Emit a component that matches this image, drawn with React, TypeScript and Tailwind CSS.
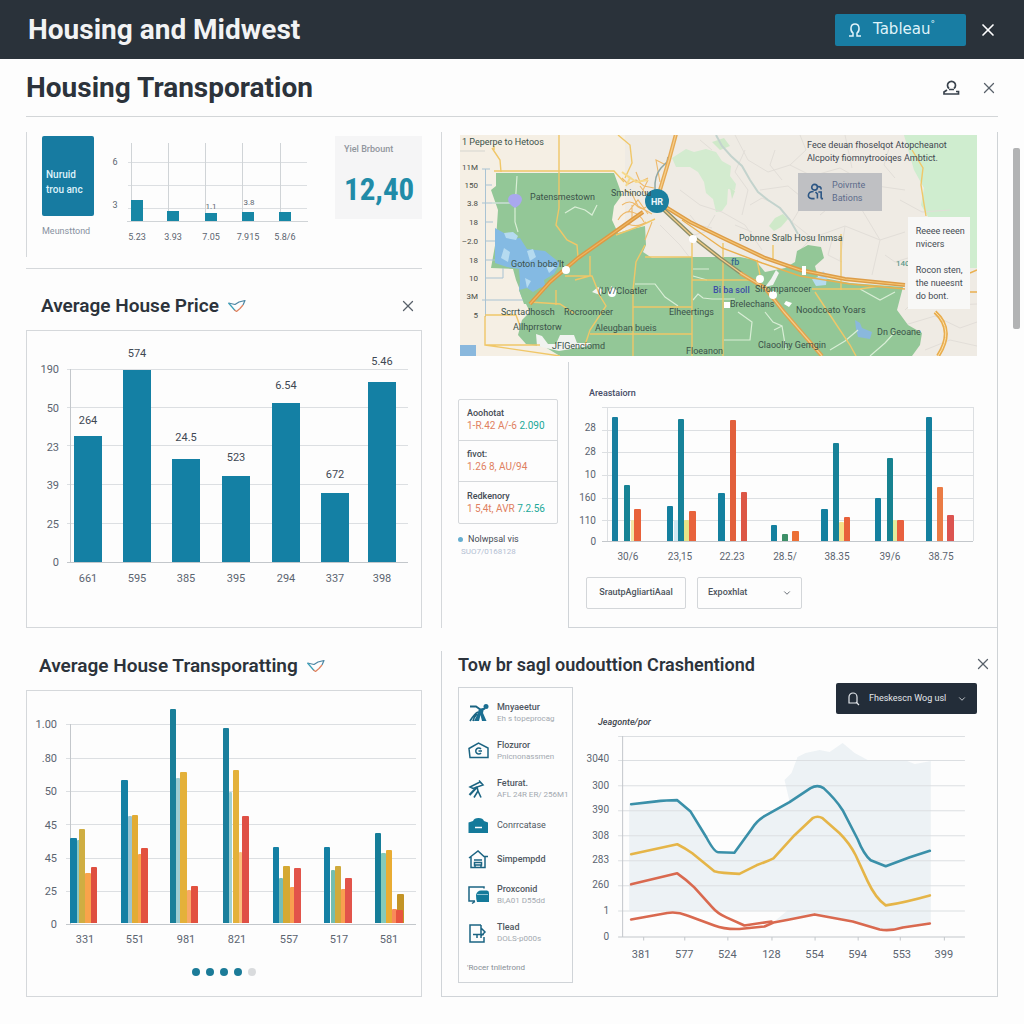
import React from "react";
import { ChevronDown, X } from "lucide-react";

const TEAL = "#1480a4";
const GRID = "#dcdfe2";
const AXIS = "#c3c7cb";

type Label = { at: number; text: string };
type Bar = { x: number; y: number; w: number; fill: string };

const price = [
  { x: 74, y: 436, value: "264", labelY: 424, tick: "661" },
  { x: 123, y: 370, value: "574", labelY: 357, tick: "595" },
  { x: 172, y: 459, value: "24.5", labelY: 441, tick: "385" },
  { x: 222, y: 476, value: "523", labelY: 461, tick: "395" },
  { x: 272, y: 403, value: "6.54", labelY: 389, tick: "294" },
  { x: 321, y: 493, value: "672", labelY: 478, tick: "337" },
  { x: 368, y: 382, value: "5.46", labelY: 365, tick: "398" },
];

const priceAxis: Label[] = [
  { at: 369, text: "190" },
  { at: 408, text: "50" },
  { at: 447, text: "23" },
  { at: 485, text: "39" },
  { at: 524, text: "25" },
  { at: 562, text: "0" },
];

const transportBars: Bar[] = [
  { x: 77, y: 840, w: 3, fill: "#8cc7c4" },
  { x: 70, y: 838, w: 7, fill: TEAL },
  { x: 79, y: 829, w: 6, fill: "#cfae42" },
  { x: 85, y: 873, w: 6, fill: "#f9a34b" },
  { x: 91, y: 867, w: 6, fill: "#de4f40" },
  { x: 128, y: 816, w: 4, fill: "#9cc5d2" },
  { x: 121, y: 780, w: 7, fill: TEAL },
  { x: 132, y: 815, w: 6, fill: "#e2ac35" },
  { x: 138, y: 854, w: 4, fill: "#f9a34b" },
  { x: 141, y: 848, w: 7, fill: "#e2513f" },
  { x: 176, y: 778, w: 4, fill: "#9fcdd2" },
  { x: 170, y: 709, w: 6, fill: "#1a7f99" },
  { x: 180, y: 772, w: 7, fill: "#e4b13a" },
  { x: 187, y: 890, w: 4, fill: "#f9a868" },
  { x: 191, y: 886, w: 7, fill: "#e2513f" },
  { x: 229, y: 792, w: 3, fill: "#9fd0d4" },
  { x: 223, y: 728, w: 6, fill: "#1a7f9c" },
  { x: 233, y: 770, w: 6, fill: "#e4b13a" },
  { x: 239, y: 852, w: 3, fill: "#fbc07c" },
  { x: 242, y: 816, w: 7, fill: "#df5046" },
  { x: 279, y: 878, w: 4, fill: "#74bdb9" },
  { x: 273, y: 847, w: 6, fill: TEAL },
  { x: 283, y: 866, w: 7, fill: "#d5a933" },
  { x: 290, y: 887, w: 5, fill: "#f9a050" },
  { x: 294, y: 868, w: 7, fill: "#e2544a" },
  { x: 331, y: 870, w: 4, fill: "#74bdb0" },
  { x: 324, y: 847, w: 6, fill: TEAL },
  { x: 335, y: 866, w: 6, fill: "#d0aa3c" },
  { x: 341, y: 889, w: 5, fill: "#f9a050" },
  { x: 345, y: 878, w: 7, fill: "#e2544a" },
  { x: 381, y: 853, w: 5, fill: "#84cabb" },
  { x: 375, y: 833, w: 6, fill: "#157d98" },
  { x: 386, y: 850, w: 6, fill: "#e9ac33" },
  { x: 397, y: 894, w: 7, fill: "#c39426" },
  { x: 392, y: 909, w: 5, fill: "#f98a5a" },
  { x: 396, y: 910, w: 7, fill: "#e8553f" },
];

const transportAxis: Label[] = [
  { at: 724, text: "1.00" },
  { at: 758, text: ".80" },
  { at: 791, text: "50" },
  { at: 825, text: "45" },
  { at: 858, text: "45" },
  { at: 891, text: "25" },
  { at: 924, text: "0" },
];

const transportTicks: Label[] = [
  { at: 85, text: "331" },
  { at: 135, text: "551" },
  { at: 186, text: "981" },
  { at: 237, text: "821" },
  { at: 289, text: "557" },
  { at: 339, text: "517" },
  { at: 389, text: "581" },
];

const areaBars: Bar[] = [
  { x: 612, y: 417, w: 6, fill: "#187f9f" },
  { x: 624, y: 485, w: 6, fill: "#178395" },
  { x: 631, y: 520, w: 3, fill: "#f3e7a6" },
  { x: 634, y: 509, w: 7, fill: "#e8613a" },
  { x: 667, y: 506, w: 6, fill: "#14809f" },
  { x: 674, y: 520, w: 5, fill: "#cfe8f3" },
  { x: 684, y: 520, w: 5, fill: "#e6e488" },
  { x: 678, y: 419, w: 6, fill: "#178299" },
  { x: 689, y: 511, w: 7, fill: "#e8633c" },
  { x: 718, y: 493, w: 7, fill: "#14809f" },
  { x: 730, y: 420, w: 6, fill: "#e2603c" },
  { x: 741, y: 492, w: 6, fill: "#dc5645" },
  { x: 771, y: 525, w: 6, fill: "#14809f" },
  { x: 782, y: 534, w: 6, fill: "#3d8f68" },
  { x: 792, y: 531, w: 7, fill: "#ec7036" },
  { x: 821, y: 509, w: 7, fill: "#14809f" },
  { x: 839, y: 522, w: 5, fill: "#f6e08a" },
  { x: 833, y: 443, w: 6, fill: "#178299" },
  { x: 844, y: 517, w: 6, fill: "#e8603a" },
  { x: 875, y: 498, w: 6, fill: "#14809f" },
  { x: 893, y: 520, w: 4, fill: "#e3ec9c" },
  { x: 887, y: 458, w: 6, fill: "#178290" },
  { x: 897, y: 520, w: 7, fill: "#e8603f" },
  { x: 926, y: 417, w: 6, fill: "#14809f" },
  { x: 937, y: 487, w: 6, fill: "#ea7b45" },
  { x: 947, y: 515, w: 7, fill: "#dc5450" },
];

const areaAxis: Label[] = [
  { at: 427, text: "28" },
  { at: 451, text: "28" },
  { at: 474, text: "10" },
  { at: 497, text: "160" },
  { at: 520, text: "110" },
  { at: 541, text: "0" },
];

const areaTicks: Label[] = [
  { at: 628, text: "30/6" },
  { at: 680, text: "23,15" },
  { at: 732, text: "22.23" },
  { at: 785, text: "28.5/" },
  { at: 837, text: "38.35" },
  { at: 890, text: "39/6" },
  { at: 941, text: "38.75" },
];

const crashAxis: Label[] = [
  { at: 758, text: "3040" },
  { at: 785, text: "300" },
  { at: 809, text: "390" },
  { at: 835, text: "308" },
  { at: 859, text: "283" },
  { at: 884, text: "260" },
  { at: 910, text: "1" },
  { at: 936, text: "0" },
];

const crashTicks: Label[] = [
  { at: 642, text: "381" },
  { at: 685, text: "577" },
  { at: 728, text: "524" },
  { at: 772, text: "128" },
  { at: 815, text: "554" },
  { at: 858, text: "594" },
  { at: 902, text: "553" },
  { at: 944, text: "399" },
];

function YLabels({ items, x, size = 11 }: { items: Label[]; x: number; size?: number }) {
  return (
    <g fontSize={size} fill="#5b6470" textAnchor="end">
      {items.map((l) => (
        <text key={l.at} x={x} y={l.at + 4}>
          {l.text}
        </text>
      ))}
    </g>
  );
}

function XLabels({ items, y, size = 11 }: { items: Label[]; y: number; size?: number }) {
  return (
    <g fontSize={size} fill="#5b6470" textAnchor="middle">
      {items.map((l) => (
        <text key={l.at} x={l.at} y={y}>
          {l.text}
        </text>
      ))}
    </g>
  );
}

function Grid({ ys, x1, x2 }: { ys: number[]; x1: number; x2: number }) {
  return (
    <g stroke={GRID}>
      {ys.map((y) => (
        <path key={y} d={`M${x1} ${y}.5H${x2}`} />
      ))}
    </g>
  );
}

function Bars({ bars, base }: { bars: Bar[]; base: number }) {
  return (
    <g>
      {bars.map((b) => (
        <path
          key={`${b.x}-${b.y}`}
          fill={b.fill}
          d={`M${b.x} ${base}V${b.y + 1}q0 -1 1 -1H${b.x + b.w - 1}q1 0 1 1V${base}Z`}
        />
      ))}
    </g>
  );
}

function CloseButton({ label, className }: { label: string; className: string }) {
  return (
    <button type="button" aria-label={label} className={className}>
      <X className="size-[18px]" strokeWidth={1.7} />
    </button>
  );
}

function CheckMark() {
  return (
    <svg viewBox="0 0 20 14" className="h-[14px] w-5" fill="none" strokeWidth="1.2" strokeLinejoin="round">
      <path d="M1.5 4 L8 5.5 L12 3 L18 1.5 L16 6" stroke="#4c86a3" />
      <path d="M1.5 4 L5 8 L8 11.500" stroke="#3b9fb8" />
      <path d="M7.500 11L9.500 12.500L13 9.500L16 6" stroke="#e0825f" />
    </svg>
  );
}

function BellIcon({ className }: { className: string }) {
  return (
    <svg viewBox="0 0 16 16" className={className} fill="none" stroke="currentColor" strokeWidth="1.5">
      <path d="M2 14h4v-3C3 9 3 2 8 2s5 7 2 9v3h4" />
    </svg>
  );
}

function MiniChart() {
  const columns = [
    { x: 131, y: 200, tick: "5.23" },
    { x: 167, y: 211, tick: "3.93" },
    { x: 205, y: 213, tick: "7.05" },
    { x: 242, y: 212, tick: "7.915" },
    { x: 279, y: 212, tick: "5.8/6" },
  ];
  return (
    <svg viewBox="102 136 225 112" className="block w-full" role="img" aria-label="Mini bar chart">
      <Grid ys={[162, 185, 208]} x1={128} x2={307} />
      <g stroke="#d0d4d7">
        {[131, 168, 205, 242, 280].map((x) => (
          <path key={x} d={`M${x}.5 143V221`} />
        ))}
        <path d="M127 221.5H308" />
      </g>
      {columns.map((c) => (
        <g key={c.x}>
          <rect x={c.x} y={c.y} width={12} height={221 - c.y} fill="#1787a5" />
          <text x={c.x + 6} y={240} fontSize="9" textAnchor="middle" fill="#5b6470">
            {c.tick}
          </text>
        </g>
      ))}
      <g fontSize="9" fill="#5b6470" textAnchor="middle">
        <text x="115" y="165">6</text>
        <text x="115" y="208">3</text>
        <text x="211" y="209" fontSize="8">1.1</text>
        <text x="249" y="205" fontSize="8">3.8</text>
      </g>
    </svg>
  );
}

function PriceChart() {
  return (
    <svg viewBox="27 331 394 296" className="block w-full" role="img" aria-label="Average house price by group">
      <Grid ys={[369, 407, 445, 484, 523]} x1={67} x2={408} />
      <path d="M70.5 369V562M67 562.5H408" stroke={AXIS} />
      <YLabels items={priceAxis} x={59} />
      {price.map((p) => (
        <g key={p.x} textAnchor="middle">
          <rect x={p.x} y={p.y} width={28} height={562 - p.y} fill={TEAL} />
          <text x={p.x + 14} y={p.labelY} fontSize="11" fill="#3f4853">
            {p.value}
          </text>
          <text x={p.x + 14} y={582} fontSize="11" fill="#5b6470">
            {p.tick}
          </text>
        </g>
      ))}
    </svg>
  );
}

function TransportChart() {
  return (
    <svg viewBox="27 691 394 269" className="block w-full" role="img" aria-label="Average house transporting by group">
      <Grid ys={[724, 758, 791, 824, 858, 891]} x1={66} x2={416} />
      <path d="M70.5 724V924M66 924.5H416" stroke={AXIS} />
      <Bars bars={transportBars} base={923} />
      <YLabels items={transportAxis} x={57} />
      <XLabels items={transportTicks} y={943} />
    </svg>
  );
}

function AreaChart() {
  return (
    <svg viewBox="569 400 428 168" className="block w-full" role="img" aria-label="Area figures">
      <Grid ys={[407, 430, 452, 475, 498, 520]} x1={602} x2={973} />
      <path d="M607.5 407V541M973.5 407V541" stroke={GRID} />
      <path d="M602 541.5H973" stroke={AXIS} />
      <Bars bars={areaBars} base={541} />
      <YLabels items={areaAxis} x={596} size={10} />
      <XLabels items={areaTicks} y={560} size={10} />
    </svg>
  );
}

function CrashChart() {
  return (
    <svg viewBox="574 730 423 236" className="block w-full" role="img" aria-label="Crash lines">
      <path
        fill="#edf2f5"
        d="M630 804L655 801L678 800L690 811L717 852L735 852L758 822L773 810L790 801L785 780L792 773L798 757L806 753L820 750L830 752L843 743L855 753L868 760L905 760L915 764L931 761V924L888 930L853 921L815 914L776 920L788 910H630Z"
      />
      <Grid ys={[736, 760, 785, 810, 835, 860, 885, 910]} x1={619} x2={965} />
      <path
        stroke={AXIS}
        d="M623.5 736V936M619 936.5H965M644.5 936v4M685.5 936v4M728.5 936v4M772.5 936v4M815.5 936v4M858.5 936v4M900.5 936v4M944.5 936v4"
      />
      <g fill="none" strokeWidth="2.6" strokeLinejoin="round" strokeLinecap="round">
        <path stroke="#d9694f" d="M632 884L678 873Q688 880 695 887L713 907Q718 913 727 917L745 925L772 921" />
        <path
          stroke="#d9694f"
          d="M632 919L668 912.500Q678 911 688 915L715 925Q725 929 740 928.500L765 926L774 922L790 919L815 914L853 921L880 929Q890 931 903 927L930 923"
        />
        <path
          stroke="#e5b548"
          d="M632 854L678 844Q686 848 693 853L715 871Q722 873 740 873.500L757 865Q768 861 774 858L795 835L813 818Q818 815 823 818L840 833Q850 843 856 855L868 881Q876 898 886 905Q905 902 930 895"
        />
        <path
          stroke="#3a90a9"
          d="M632 804L655 801.500Q668 800 678 800L691 811L707 837Q715 852 719 852L735 852.500L752 829Q757 821 765 816L790 802L811 788Q818 784 824 788Q836 799 843 810L858 839Q864 854 871 860L886 866L910 857L930 850.500"
        />
      </g>
      <YLabels items={crashAxis} x={610} size={10} />
      <XLabels items={crashTicks} y={957} />
    </svg>
  );
}

const mapAxis: Label[] = [
  { at: 167, text: "11M" },
  { at: 185, text: "150" },
  { at: 203, text: "3.8" },
  { at: 222, text: "18" },
  { at: 241, text: "–2.0" },
  { at: 260, text: "18" },
  { at: 278, text: "10" },
  { at: 296, text: "3M" },
  { at: 315, text: "5" },
];

const places: { x: number; y: number; text: string }[] = [
  { x: 462, y: 145, text: "1 Peperpe to Hetoos" },
  { x: 530, y: 200, text: "Patensmestown" },
  { x: 611, y: 196, text: "Smhinouu" },
  { x: 511, y: 267, text: "Goton bobe'lt" },
  { x: 598, y: 294, text: "(UV/Cloatler" },
  { x: 501, y: 315, text: "Scrrtadhosch" },
  { x: 564, y: 315, text: "Rocroomeer" },
  { x: 513, y: 330, text: "Allhprrstorw" },
  { x: 595, y: 331, text: "Aleugban bueis" },
  { x: 552, y: 349, text: "JFlGenciomd" },
  { x: 669, y: 315, text: "Elheertings" },
  { x: 686, y: 354, text: "Floeanon" },
  { x: 739, y: 241, text: "Pobnne Sralb Hosu Inmsa" },
  { x: 755, y: 292, text: "Slfompancoer" },
  { x: 730, y: 307, text: "Brelechans" },
  { x: 796, y: 313, text: "Noodcoato Yoars" },
  { x: 877, y: 335, text: "Dn Geoane" },
  { x: 758, y: 348, text: "Claoolhy Gemgin" },
];

function MapDrawing() {
  return (
    <svg viewBox="460 135 517 221" className="block w-full" role="img" aria-label="Map of the Midwest">
      <rect x="460" y="135" width="517" height="221" fill="#f5efe4" />
      <rect x="625" y="135" width="352" height="221" fill="#efebe4" />
      <path fill="#cfedcf" d="M904 135H977V268H970V220H930L921 205L924 188L914 170Z" />
      <path
        fill="#d3ebcf"
        d="M672 158L686 149L694 152L706 149L716 152L722 161L731 166L730 176L736 184L735 190L728 189L727 204L722 211L716 212L713 199L706 193L704 182L698 172L690 167L676 167Z"
      />
      <path fill="#cfe9c9" d="M712 142l12-4 6 8-10 4zM769 226l6-8 8-4 5 5-7 8-7 4zM730 188l5 3-3 8z" />
      <g fill="none" stroke="#e2ded8" strokeWidth="1">
        <path d="M735 135L748 160L768 172L790 165L812 176L840 168L870 185L905 190" />
        <path d="M760 190L788 186L805 200L792 222L812 238L845 226L880 240L905 232" />
        <path d="M800 135L806 150L790 165M845 135L852 168M870 185L862 210L880 240L872 275" />
        <path d="M680 190L700 205L722 212L745 225L762 250M715 215L705 232L690 236M845 226L840 260M812 238L800 250" />
        <path d="M905 325L935 316L960 328L977 322M925 350L950 340L977 346M905 310L915 300L935 306L977 304" />
        <path d="M660 225L680 245L690 258M745 150L735 172L748 190L742 215M900 200L922 212L950 210" />
        <path d="M750 205L762 198L775 204M700 140L712 150M820 215L832 205L850 208M885 255L895 262L908 258M735 225L752 232" />
        <path d="M775 150L770 165L782 180M690 215L698 225L712 228M832 240L828 255L842 262M890 145L884 165L895 178" />
      </g>
      <path
        d="M716 135L722 146L731 156L742 166L750 180L758 192L768 200L780 208L790 220L798 234"
        fill="none"
        stroke="#c3d3cd"
        strokeWidth="2"
      />
      <path
        fill="#93c797"
        d="M496 173H614L618 184L622 195L614 206L612 220L618 233L632 229L645 226L646 245L643 252L652 258L692 257L740 257L755 260L765 272L785 268L795 262L797 251L808 245L821 247L824 258L815 266L818 277L850 283L903 287L897 310L908 325L922 333L920 345L912 356H560L545 347L526 344L518 335L522 320L530 312L524 300L516 280L513 269L491 268L496 240L498 210L491 190L496 186Z"
      />
      <path
        fill="#84bae3"
        d="M495 228L504 233L512 239L520 238L527 249L545 251L560 263L554 274L544 280L546 290L533 300L523 300L519 290L520 281L519 269L507 267L495 263Z"
      />
      <path fill="#93c797" d="M519 290l8-2 6 4 8-5 6 5-14 12h-9z" />
      <g fill="#b5dbf0">
        <path d="M504 233l9-1 5 4-2 4-10-2zM501 258l3-10 6 4-2 10zM527 251l6-2 3 8-6 4zM525 278l6 3-4 7zM546 266l10 1-7 6z" />
        <path d="M812 279l9-3 2-5 4 4-1 10-10 1z" />
      </g>
      <path fill="#8ab8dd" d="M855 320l5 3 2 5 10 4-2 7-12-2-2-8zM460 345h16v11h-16z" />
      <path
        fill="#f1f3f0"
        d="M536 334l6 2 6 8h8l4-9h14l3 8h14l-2 3-30 5-22-5zM598 287l5 3-3 5-8-3zM611 286l7 5-8 5zM776 270l3 3-6 12-8 2 6-8z"
      />
      <path
        fill="none"
        stroke="#a9c3d3"
        strokeWidth="1"
        d="M485.500 169V317M485 185H492M482 203H510M485 222H493M485 241H495M485 260H495M485 278H503V268M482 300H523M482 169H490"
      />
      <path
        fill="none"
        stroke="#d9eed6"
        strokeWidth="1.200"
        d="M517 176L516 192L515 206V222L518 232M492 203H510M565 213L575 207L585 210L592 215L597 205M635 284H655L665 297L678 306M693 300L698 294L703 298L712 299H735M693 269H709M693 276L707 280M765 312L773 322L782 326L786 350M782 326L774 330M724 340H750L752 322L738 312M860 289L880 300L895 292M830 350L845 341L858 330M870 356L885 343L895 332"
      />
      <g fill="none" stroke="#f0c768" strokeWidth="1.400">
        <path d="M494 171H614L624 182M559 135V208L556 225L567 240L577 245L578 257M492 148L500 160L501 172M494 146V150" />
        <path d="M618 135L630 145L632 163L625 178M485 315H516L520 326M485 316V345H540M485 345L560 356" />
        <path d="M565 276H592L600 296L606 306L590 330L585 345M590 256V276L575 280M645 245L636 262L633 290V356" />
        <path d="M633 307H692M590 334H692M692 240V356M723 243V356M692 280H760M645 257H692M530 302L560 304L575 314" />
        <path d="M556 290V305M841 234V290M773 245V262M812 289H860L880 286M815 292L830 315L850 345L856 356M757 260L760 275" />
        <path d="M912 150L923 168L921 185L924 204L926 216M616 235L640 226L655 219" />
      </g>
      <g fill="none" stroke="#eeb96a" strokeWidth="1.100">
        <path d="M622 178l6 6 8-4 8 6 10 2M625 190l7 4 6 12 14 8M628 212l10-12 10 14M632 205v16l-4 4M640 186l6 8 10 4M648 180l-5 10" />
        <path d="M660 182L656 160L666 165M652 222L645 240M622 205q8-6 14 0t10 2M618 220q6-10 14-8t12 10M636 172l4 10 8-4M628 224q10 4 18-2" />
      </g>
      <g fill="none" stroke="#f6d98c" strokeWidth="2">
        <path d="M622 172l8 6-4 8M628 176l8 6 12-2" />
      </g>
      <path fill="none" stroke="#8fa6a3" strokeWidth="1.500" d="M655 190Q654 176 661 168L667 162L668 157" />
      <g fill="none" strokeLinecap="butt">
        <path stroke="#e6a954" strokeWidth="4" d="M676 134L669 160L660 190" />
        <path stroke="#f6cf8c" strokeWidth="1.200" d="M676 134L669 160L660 190" />
        <path stroke="#dc9a44" strokeWidth="4" d="M643 212L612 234L578 258L550 282L530 304" />
        <path stroke="#f0b560" strokeWidth="1.200" d="M643 212L612 234L578 258L550 282L530 304" />
        <path stroke="#dd9d48" strokeWidth="4" d="M664 206L690 222L725 239L765 258L800 270L845 279L905 285" />
        <path stroke="#f5c675" strokeWidth="1.200" d="M664 206L690 222L725 239L765 258L800 270L845 279L905 285" />
        <path stroke="#eab04f" strokeWidth="1.400" d="M682 220L722 248L762 263L800 276L850 284L905 289M970 273L977 270M970 292H977" />
        <path stroke="#8d8f68" strokeWidth="4" d="M662 208L692 236L720 258L742 274" />
        <path stroke="#dfa34e" strokeWidth="4" d="M740 273L765 288L784 312L822 356" />
        <path stroke="#f6cd87" strokeWidth="1.200" d="M662 208L692 236L720 258L742 274L765 288L784 312L822 356" />
        <path stroke="#e9ad4e" strokeWidth="4" d="M935 312Q955 330 938 356" />
        <path stroke="#fbe2ad" strokeWidth="1" d="M935 312Q955 330 938 356" />
      </g>
      <path fill="#a9a8ee" d="M508 199q1-5 7-5t7 5q0 5-7 9q-7-4-7-9z" />
      <g fill="#ffffff">
        <circle cx="566" cy="270" r="4" />
        <circle cx="612" cy="293" r="4" />
        <circle cx="693" cy="239" r="4" />
        <circle cx="760" cy="279" r="4" />
        <circle cx="773" cy="295" r="4" />
        <path d="M802 266h4v9h-4zM724 302h6v6h-6zM786 301l6 2-3 4-5-3z" />
      </g>
      <circle cx="657" cy="201" r="12" fill="#1a7f9f" />
      <text x="657" y="205" textAnchor="middle" fontSize="9" fontWeight="700" fill="#eaf6fb">
        HR
      </text>
      <path d="M460 151h25" stroke="#d5d5cf" />
      <g fontSize="8" fill="#474b44" textAnchor="end">
        {mapAxis.map((l) => (
          <text key={l.at} x={478} y={l.at + 3}>
            {l.text}
          </text>
        ))}
      </g>
      <g fontSize="9" fill="#3b5149">
        {places.map((p) => (
          <text key={p.text} x={p.x} y={p.y}>
            {p.text}
          </text>
        ))}
      </g>
      <g fontSize="9" fontWeight="500" fill="#3d4da8">
        <text x="713" y="293">Bi ba soll</text>
        <text x="731" y="265" fill="#35688f">fb</text>
        <text x="896" y="266" fill="#5f9a8c" fontSize="8">140</text>
      </g>
      <g fontSize="9" fill="#3f4750">
        <text x="807" y="148">Fece deuan fhoselqot Atopcheanot</text>
        <text x="807" y="161">Alcpoity fiomnytrooiqes Ambtict.</text>
      </g>
    </svg>
  );
}

function MapPanel() {
  return (
    <div className="relative">
      <MapDrawing />
      <button
        type="button"
        className="absolute top-[17%] left-[65.4%] flex h-[38px] w-[84px] items-center gap-2 bg-[#bfc0c3] pl-[9px] text-left text-[9px] leading-[13px] text-[#5d6b8b]"
      >
        <svg viewBox="0 0 18 18" className="size-[17px]" fill="none" stroke="#2d5684" strokeWidth="1.7">
          <circle cx="8" cy="4.500" r="3" />
          <path d="M7 9C0 9 0 16.500 5 16.500h3M11 4q4-1 4 3M9 9.500l2 2v5M12 9.500h3v7M15 16.500h2" />
        </svg>
        <span>
          Poivrnte
          <br />
          Bations
        </span>
      </button>
      <div className="absolute top-[37%] left-[86.6%] flex w-[62px] flex-col gap-[13px] bg-[#f8f8f7] px-2 pt-2 pb-[6px] text-[9px] leading-[13px] whitespace-nowrap text-[#444b52]">
        <p>
          Reeee reeen
          <br />
          nvicers
        </p>
        <p>
          Rocon sten,
          <br />
          the nueesnt
          <br />
          do bont.
        </p>
      </div>
    </div>
  );
}

const stats = [
  { name: "Aoohotat", warm: "1-R.42 A/-6", cool: "2.090" },
  { name: "fivot:", warm: "1.26 8, AU/94", cool: "" },
  { name: "Redkenory", warm: "1 5,4t, AVR", cool: "7.2.56" },
];

function StatsList() {
  return (
    <div className="pt-[43px] pr-[10px] pl-4">
      <ul className="divide-y divide-[#d5d8db] rounded-xs border border-[#d5d8db]">
        {stats.map((s) => (
          <li key={s.name} className="flex h-[41px] flex-col justify-center pl-2 whitespace-nowrap">
            <span className="text-[9px] leading-[12px] font-medium text-[#454c55]">{s.name}</span>
            <span className="text-[10px] leading-[14px] text-[#e0805f]">
              {s.warm} <span className="text-[#20a898]">{s.cool}</span>
            </span>
          </li>
        ))}
      </ul>
      <p className="mt-[9px] flex items-center gap-[5px] text-[9px] leading-[12px] text-[#454c55]">
        <span className="size-[5px] rounded-full bg-[#66aed0]" />
        Nolwpsal vis
      </p>
      <p className="pl-[3px] text-[8px] leading-[14px] text-[#b3c0d3]">SUO7/0168128</p>
    </div>
  );
}

const features: { name: string; note?: string; strong?: boolean; icon: React.ReactNode }[] = [
  {
    name: "Mnyaeetur",
    note: "Eh s topeprocag",
    icon: (
      <g>
        <circle cx="18" cy="3.500" r="2.500" fill="#1b6f92" stroke="none" />
        <path d="M2 3.500H8L13 7L17 5.500" strokeWidth="1.900" />
        <path d="M11 6L16 5L15 10L18.500 18H14L12.500 12L11 18H6Q9 13 10 9Z" fill="#1b6f92" stroke="none" />
        <path d="M10 9Q7 10 2 18M9 11Q6 14 5 18" strokeWidth="1.700" />
      </g>
    ),
  },
  {
    name: "Flozuror",
    note: "Pnicnonassmen",
    icon: (
      <g>
        <path d="M1 7.500L10.500 2L20 7V16.500H2Z" />
        <path d="M13 8A3 3 0 1 0 13 12M10.500 10H14" />
      </g>
    ),
  },
  {
    name: "Feturat.",
    note: "AFL 24R ER/ 256M1",
    icon: (
      <g>
        <path d="M2 8L12 3L15 6L5 9.500ZM11 1.500L15.500 6.500" />
        <path d="M9 8L1.500 16" strokeWidth="2.200" />
        <path d="M9 8L10 12L6 18.500M10 12L13 18.500" strokeWidth="1.600" />
      </g>
    ),
  },
  {
    name: "Conrrcatase",
    icon: (
      <g fill="#147a9a" stroke="none">
        <path d="M0.500 7.500L5 6Q6 3 10.500 3T16 6L20 7.500V18H0.500Z" />
        <path d="M7 12.500h7" stroke="#ffffff" strokeWidth="1.500" />
      </g>
    ),
  },
  {
    name: "Simpempdd",
    strong: true,
    icon: (
      <g>
        <path d="M1 9L10 2L16 7.500H20M3 8V18.500H17V8" />
        <path d="M6 11h8M6.500 16V13.500h7V16ZM7 18v-2h6v2" />
      </g>
    ),
  },
  {
    name: "Proxconid",
    note: "Bl,A01 D55dd",
    icon: (
      <g>
        <path d="M16 3.500V2H1V16H7M4 18.500L7 16.500" />
        <path d="M8 10Q9 5.500 13 5.500H19Q21 5.500 21 8V17H9Q8 14 8 10Z" fill="#147a9a" stroke="none" />
        <path d="M9 9.500H20" stroke="#8fc3d4" strokeWidth="1" />
      </g>
    ),
  },
  {
    name: "Tlead",
    note: "DOLS-p000s",
    icon: (
      <g>
        <path d="M13 2H2V19H16V14M13 2V5L17 9L13 13M13 5V15M5 11.500H16M9 11.500V15" />
      </g>
    ),
  },
];

function FeatureList() {
  return (
    <div className="mt-1 w-[115px] shrink-0 border border-[#d0d4d8] pt-[6px] pb-2">
      <ul>
        {features.map((f) => (
          <li
            key={f.name}
            className={`flex items-center gap-2 pl-[9px] whitespace-nowrap ${f.note ? "h-[38px]" : "h-[34px]"}`}
          >
            <svg viewBox="0 0 21 21" className="size-[21px] shrink-0" fill="none" stroke="#1b6482" strokeWidth="1.500">
              {f.icon}
            </svg>
            <span className="min-w-0">
              <span
                className={`block text-[9px] leading-[12px] text-[#505862] ${f.note || f.strong ? "font-medium" : ""}`}
              >
                {f.name}
              </span>
              {f.note && <span className="block text-[8px] leading-[12px] text-[#a3a9b0]">{f.note}</span>}
            </span>
          </li>
        ))}
      </ul>
      <p className="mt-[10px] pl-2 text-[8px] leading-[12px] text-[#878e96]">'Rocer tnlietrond</p>
    </div>
  );
}

export default function App() {
  return (
    <div className="relative min-h-screen bg-[#fdfdfd] font-[Roboto,'Liberation_Sans',sans-serif] text-[#2c333b]">
      <header className="flex h-[59px] items-center justify-between bg-[#2a323a] pr-[26px] pl-7">
        <h1 className="text-[28px] leading-8 font-bold text-[#f2f3f4]">Housing and Midwest</h1>
        <div className="flex items-center gap-3">
          <button
            type="button"
            className="flex h-8 w-[131px] items-center gap-[10px] rounded-xs bg-[#187da3] pl-3 text-[15px] text-[#dff3fa]"
          >
            <BellIcon className="size-4" />
            <span className="flex items-start font-['DejaVu_Sans',sans-serif]">
              Tableau
              <span className="text-[9px] leading-3">°</span>
            </span>
          </button>
          <button type="button" aria-label="Close window" className="text-white">
            <X className="size-5" strokeWidth={2} />
          </button>
        </div>
      </header>

      <div className="mx-[26px] flex h-[58px] items-center justify-between border-b border-[#d3d6d8]">
        <h2 className="text-[28px] leading-8 font-bold">Housing Transporation</h2>
        <div className="flex items-center gap-5">
          <button type="button" aria-label="Account">
            <svg viewBox="0 0 18 18" className="size-[18px]" fill="none" stroke="#39424c" strokeWidth="1.700">
              <path d="M7 9.500A4 4 0 1 1 12 9.500" />
              <path d="M7 10.500H12M5 11L2 13V15H16.500V12.500H14" />
            </svg>
          </button>
          <CloseButton label="Close section" className="text-[#59616a]" />
        </div>
      </div>

      <main className="grid grid-cols-[396fr_557fr] gap-x-[19px] px-[26px] pt-[15px] pb-[27px]">
        <div className="min-w-0">
          <section className="flex h-[125px] gap-2 border-l border-[#d5d8db] pt-1 pl-[15px]">
            <div className="w-[52px] shrink-0">
              <div className="flex h-20 flex-col justify-end rounded-xs bg-[#177ba1] px-1 pb-[19px] text-[10px] leading-[15px] font-medium whitespace-nowrap text-[#def2fa]">
                <span>Nuruid</span>
                <span>trou anc</span>
              </div>
              <p className="mt-2 text-[9px] leading-[14px] whitespace-nowrap text-[#8791a0]">Meunsttond</p>
            </div>
            <div className="min-w-0 flex-1">
              <MiniChart />
            </div>
            <div className="h-[83px] w-[87px] shrink-0 bg-[#f5f5f6] px-[9px] pt-[7px]">
              <p className="text-[9px] leading-[12px] font-medium text-[#91969d]">Yiel Brbount</p>
              <p className="mt-[17px] font-['Liberation_Sans_Narrow','Roboto_Condensed',Roboto,sans-serif] text-[31px] leading-9 font-bold text-[#218ba8]">
                12,40
              </p>
            </div>
          </section>

          <section className="mt-[11px] border-t border-[#d5d8db] pt-[18px]">
            <div className="mb-[5px] flex h-[38px] items-center justify-between pr-[5px] pl-[15px]">
              <h3 className="flex items-center gap-2 text-[19px] leading-6 font-semibold">
                Average House Price
                <CheckMark />
              </h3>
              <CloseButton label="Close average house price" className="text-[#59616a]" />
            </div>
            <div className="border border-[#d5d8db]">
              <PriceChart />
            </div>
          </section>

          <section className="mt-[19px]">
            <h3 className="mb-[5px] flex h-[38px] items-center gap-2 pl-[13px] text-[19px] leading-6 font-semibold">
              Average House Transporatting
              <CheckMark />
            </h3>
            <div className="border border-[#d5d8db] pb-5">
              <TransportChart />
              <div className="flex justify-center gap-[6px] pt-2">
                {[1, 2, 3, 4, 5].map((n) => (
                  <button
                    key={n}
                    type="button"
                    aria-label={`Page ${n}`}
                    className={`size-2 rounded-full ${n < 5 ? "bg-[#1b7b98]" : "bg-[#d9dbdd]"}`}
                  />
                ))}
              </div>
            </div>
          </section>
        </div>

        <div className="flex min-w-0 flex-col border-r border-[#cfd3d6]">
          <section className="border-l border-[#d5d8db]">
            <div className="pt-[3px] pr-5 pl-[18px]">
              <MapPanel />
            </div>
            <div className="flex">
              <div className="w-[126px] shrink-0">
                <StatsList />
              </div>
              <div className="mt-[6px] min-w-0 flex-1 border-b border-l border-[#d0d4d8] pb-[18px]">
                <h4 className="pt-[25px] pl-5 text-[9px] leading-[13px] font-medium text-[#454c66]">Areastaiorn</h4>
                <AreaChart />
                <div className="mt-[9px] flex gap-[11px] pl-[17px]">
                  <button
                    type="button"
                    className="h-8 w-[100px] rounded-xs border border-[#d3d6d9] text-[9px] font-medium text-[#4c535c]"
                  >
                    SrautpAgliartiAaal
                  </button>
                  <div className="relative w-[105px]">
                    <select
                      aria-label="Export format"
                      className="h-8 w-full appearance-none rounded-xs border border-[#d3d6d9] bg-transparent pl-[10px] text-[9px] font-medium text-[#4c535c]"
                    >
                      <option>Expoxhlat</option>
                    </select>
                    <ChevronDown className="pointer-events-none absolute top-[11px] right-[10px] size-[10px] text-[#4c535c]" />
                  </div>
                </div>
              </div>
            </div>
          </section>

          <section className="mt-[23px] flex-1 border-b border-l border-[#d0d4d8] pl-4">
            <div className="flex h-8 items-start justify-between pt-[2px] pr-[5px]">
              <h3 className="text-[18px] leading-6 font-semibold">Tow br sagl oudouttion Crashentiond</h3>
              <CloseButton label="Close crash panel" className="pt-[2px] text-[#59616a]" />
            </div>
            <div className="flex">
              <FeatureList />
              <div className="min-w-0 flex-1">
                <div className="flex justify-end pr-5">
                  <button
                    type="button"
                    className="flex h-[31px] w-[141px] items-center rounded-xs bg-[#232d39] pr-[10px] pl-3 text-[9px] text-[#e3e7eb]"
                  >
                    <svg viewBox="0 0 12 14" className="mr-[9px] h-[14px] w-3" fill="none" stroke="currentColor" strokeWidth="1.200">
                      <path d="M1 11V5a4 4 0 0 1 8 0v6zM8 10l3 3" />
                    </svg>
                    <span className="flex-1 text-left">Fheskescn Wog usl</span>
                    <ChevronDown className="size-[10px]" />
                  </button>
                </div>
                <h4 className="mt-[2px] mb-[2px] pl-[25px] text-[9px] leading-[12px] font-medium text-[#3b424b] italic">
                  Jeagonte/por
                </h4>
                <CrashChart />
              </div>
            </div>
          </section>
        </div>
      </main>

      <div className="absolute top-[148px] right-1 h-[181px] w-[7px] rounded-xs bg-[#b2b3b4]" />
    </div>
  );
}
